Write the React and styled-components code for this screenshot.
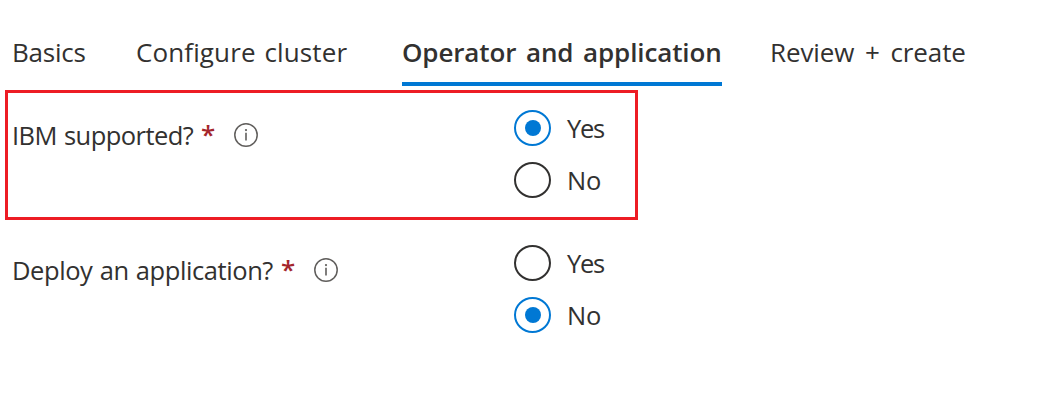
import React, { useState } from "react";
import styled, { createGlobalStyle } from "styled-components";

const GlobalStyle = createGlobalStyle`
  *, *::before, *::after { box-sizing: border-box; }
  body {
    margin: 0;
    background: #fff;
    color: #323130;
    font-family: "Open Sans", "Noto Sans", sans-serif;
    overflow: hidden;
  }
`;

const Page = styled.main`
  display: flex;
  flex-direction: column;
  width: 1042px;
  height: 406px;
`;

const TabList = styled.nav`
  display: flex;
  height: 52px;
  margin: 34px 0 4px 12px;
`;

const Tab = styled.button`
  flex: none;
  width: ${(p) => p.$width}px;
  margin: 0 ${(p) => p.$gap}px 0 0;
  padding: 0;
  border: 0;
  border-bottom: 4px solid ${(p) => (p.$active ? "#0078d4" : "transparent")};
  background: none;
  color: inherit;
  font-family: inherit;
  font-size: 26px;
  font-weight: ${(p) => (p.$active ? 600 : 400)};
  line-height: 36px;
  letter-spacing: ${(p) => p.$tracking}px;
  word-spacing: ${(p) => p.$wordSpacing}px;
  text-align: left;
  white-space: nowrap;
  display: flex;
  align-items: flex-start;
  cursor: pointer;
`;

const Question = styled.section`
  display: flex;
  width: 633px;
  height: 130px;
  margin: 0 0 5px 5px;
  padding: 17px 4px 0;
  border: 3px solid ${(p) => (p.$highlighted ? "#ed1c24" : "transparent")};
`;

const Label = styled.div`
  display: flex;
  align-items: flex-start;
  width: 502px;
  padding-top: 7px;
  font-size: 25.5px;
  line-height: 36px;
  white-space: nowrap;
`;

const LabelText = styled.span`
  width: ${(p) => p.$width}px;
  letter-spacing: ${(p) => p.$tracking}px;
  word-spacing: 1px;
`;

const Required = styled.span`
  width: 33px;
  color: #a4262c;
  font-size: 26px;
  font-weight: 600;
  line-height: 34px;
`;

const Info = styled.svg`
  width: 24px;
  height: 24px;
  margin-top: 6px;
`;

const Options = styled.div`
  display: flex;
  flex-direction: column;
  gap: 16px;
`;

const Option = styled.label`
  display: flex;
  gap: 16px;
  height: 36px;
  cursor: pointer;
`;

const Radio = styled.input`
  appearance: none;
  display: grid;
  place-items: center;
  width: 37px;
  height: 36px;
  margin: 0;
  border: 2px solid #323130;
  border-radius: 50%;

  &:checked { border-color: #0078d4; }
  &:checked::before {
    content: "";
    width: 16px;
    height: 16px;
    border-radius: 50%;
    background: #0078d4;
  }
`;

const OptionText = styled.span`
  font-size: 25.5px;
  line-height: 36px;
  letter-spacing: ${(p) => p.$tracking}px;
`;

const tabs = [
  { name: "Basics", width: 75, gap: 49, tracking: -0.22, wordSpacing: 0 },
  { name: "Configure cluster", width: 211, gap: 55, tracking: 0.12, wordSpacing: 2 },
  { name: "Operator and application", width: 320, gap: 48, tracking: -0.12, wordSpacing: 3 },
  { name: "Review + create", width: 200, gap: 0, tracking: -0.1, wordSpacing: 4 },
];

const questions = [
  { id: "ibm", text: "IBM supported?", width: 189, tracking: -0.55, initial: "Yes", highlighted: true },
  { id: "deploy", text: "Deploy an application?", width: 269, tracking: -0.42, initial: "No" },
];

const optionTracking = { Yes: -1.3, No: -0.3 };

function InfoIcon() {
  return (
    <Info viewBox="0 0 24 24" fill="none" aria-label="Info">
      <circle cx="12" cy="12" r="11.2" stroke="#605e5c" strokeWidth="1.5" />
      <path d="M12 9.8V17.5" stroke="#605e5c" strokeWidth="1.6" />
      <circle cx="12" cy="7.1" r="1.1" fill="#605e5c" />
    </Info>
  );
}

function RadioQuestion({ id, text, width, tracking, initial, highlighted }) {
  const [value, setValue] = useState(initial);
  return (
    <Question $highlighted={highlighted}>
      <Label>
        <LabelText $width={width} $tracking={tracking}>{text}</LabelText>
        <Required>*</Required>
        <InfoIcon />
      </Label>
      <Options role="radiogroup" aria-label={text}>
        {["Yes", "No"].map((option) => (
          <Option key={option}>
            <Radio
              type="radio"
              name={id}
              checked={value === option}
              onChange={() => setValue(option)}
            />
            <OptionText $tracking={optionTracking[option]}>{option}</OptionText>
          </Option>
        ))}
      </Options>
    </Question>
  );
}

export default function App() {
  const [active, setActive] = useState("Operator and application");
  return (
    <Page>
      <GlobalStyle />
      <TabList>
        {tabs.map((tab) => (
          <Tab
            key={tab.name}
            $width={tab.width}
            $gap={tab.gap}
            $tracking={tab.tracking}
            $wordSpacing={tab.wordSpacing}
            $active={tab.name === active}
            onClick={() => setActive(tab.name)}
          >
            {tab.name}
          </Tab>
        ))}
      </TabList>
      {questions.map((question) => (
        <RadioQuestion key={question.id} {...question} />
      ))}
    </Page>
  );
}
